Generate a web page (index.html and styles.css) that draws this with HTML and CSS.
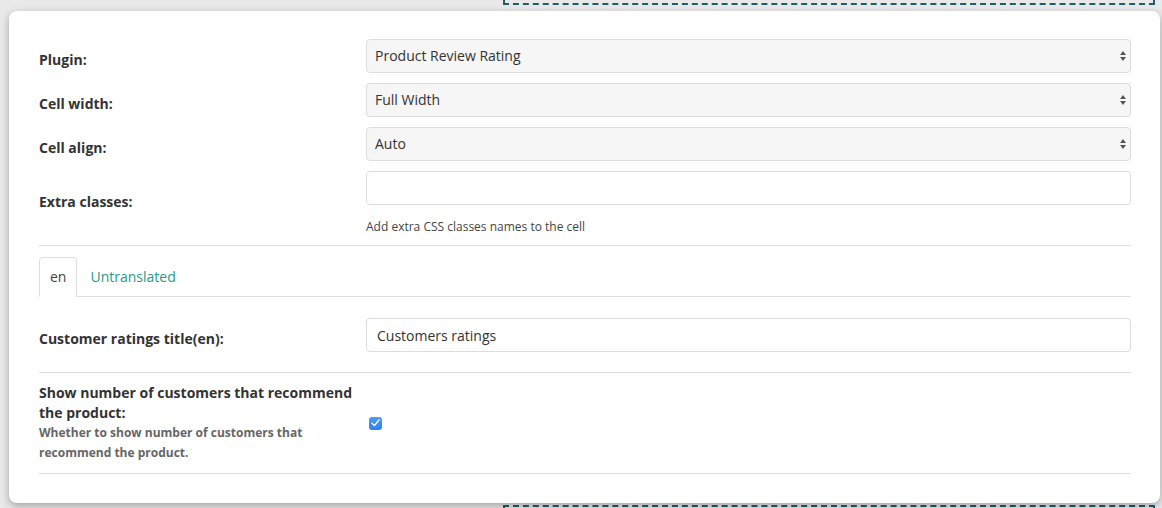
FILE: index.html
```html
<!DOCTYPE html>
<html lang="en">
<head>
<meta charset="utf-8">
<title>Cell settings</title>
<link rel="stylesheet" href="styles.css">
</head>
<body>
<div class="dropzone dropzone-top"></div>
<div class="card">
  <div class="form-row">
    <label class="label">Plugin:</label>
    <div class="select-wrap">
      <select class="control select"><option>Product Review Rating</option></select>
    </div>
  </div>
  <div class="form-row">
    <label class="label">Cell width:</label>
    <div class="select-wrap">
      <select class="control select"><option>Full Width</option></select>
    </div>
  </div>
  <div class="form-row">
    <label class="label">Cell align:</label>
    <div class="select-wrap">
      <select class="control select"><option>Auto</option></select>
    </div>
  </div>
  <div class="form-row form-row-help">
    <label class="label label-plain">Extra classes:</label>
    <div class="field">
      <input class="control input" type="text" value="">
      <p class="help">Add extra CSS classes names to the cell</p>
    </div>
  </div>
  <hr class="divider divider-top">
  <ul class="tabs">
    <li class="tab tab-active">en</li>
    <li class="tab tab-link">Untranslated</li>
  </ul>
  <div class="form-row form-row-last">
    <label class="label">Customer ratings title(en):</label>
    <input class="control input input-text" type="text" value="Customers ratings">
  </div>
  <hr class="divider divider-mid">
  <div class="form-row form-row-check">
    <div class="label-block">
      <div class="label-strong">Show number of customers that recommend the product:</div>
      <div class="label-help">Whether to show number of customers that recommend the product.</div>
    </div>
    <div class="check-cell">
      <span class="checkbox" role="checkbox" aria-checked="true">
        <svg width="9" height="8" viewBox="0 0 9 8"><path d="M1 4.2 L3.4 6.6 L8 1" fill="none" stroke="#fff" stroke-width="1.4" stroke-linecap="round" stroke-linejoin="round"/></svg>
      </span>
    </div>
  </div>
  <hr class="divider divider-bottom">
</div>
<div class="dropzone dropzone-bottom"></div>
</body>
</html>
```

FILE: styles.css
```css
* { box-sizing: border-box; }

html, body {
  margin: 0;
  padding: 0;
}

body {
  width: 1162px;
  height: 508px;
  overflow: hidden;
  background: #e9e9e9;
  font-family: "Open Sans", "Liberation Sans", sans-serif;
  font-size: 14px;
  color: #333;
}

.dropzone {
  margin-left: 503px;
  width: 652px;
  border: 2px dashed #1e5d6d;
}

.dropzone-top {
  height: 5px;
  border-top: none;
}

.dropzone-bottom {
  height: 20px;
  margin-top: 2px;
  border-bottom: none;
}

.card {
  position: relative;
  z-index: 1;
  margin: 6px 0 0 9px;
  width: 1151px;
  height: 492px;
  background: #fff;
  border-radius: 8px;
  box-shadow: 0 3px 9px rgba(0, 0, 0, 0.3);
  padding: 28px 29px 0 30px;
}

.form-row {
  display: grid;
  grid-template-columns: 327px 1fr;
  align-items: center;
  margin-bottom: 10px;
}

.form-row-last {
  margin-bottom: 0;
}

.label {
  font-weight: 700;
  line-height: 20px;
  padding-top: 8px;
  color: #333;
}

.label-plain {
  padding-top: 0;
  margin-top: -4px;
}

.select-wrap {
  position: relative;
}

.select-wrap::before,
.select-wrap::after {
  content: "";
  position: absolute;
  right: 5px;
  width: 0;
  height: 0;
  border-left: 3.5px solid transparent;
  border-right: 3.5px solid transparent;
  pointer-events: none;
}

.select-wrap::before {
  top: 12px;
  border-bottom: 4px solid #555;
}

.select-wrap::after {
  top: 18px;
  border-top: 4px solid #555;
}

.control {
  display: block;
  width: 100%;
  height: 34px;
  margin: 0;
  border: 1px solid #dcdcdc;
  border-radius: 4px;
  font-family: "Open Sans", "Liberation Sans", sans-serif;
  font-size: 14px;
  color: #333;
  outline: none;
}

.select {
  appearance: none;
  -webkit-appearance: none;
  background: #f6f6f6;
  padding: 0 24px 1px 8px;
}

.input {
  background: #fff;
  padding: 0 10px;
}

.input-text {
  padding-top: 1px;
}

.help {
  margin: 12px 0 0;
  font-size: 12px;
  line-height: 20px;
  color: #444;
}

.divider {
  border: 0;
  border-top: 1px solid #dedede;
  height: 0;
  margin: 0;
}

.divider-top {
  margin-top: -2px;
  margin-bottom: 11px;
}

.tabs {
  list-style: none;
  display: flex;
  margin: 0 0 21px;
  padding: 0;
  border-bottom: 1px solid #dedede;
}

.tab {
  height: 40px;
  line-height: 38px;
  margin-right: 2px;
  margin-bottom: -1px;
  border: 1px solid transparent;
  border-radius: 4px 4px 0 0;
}

.tab-active {
  padding: 0 10px;
  border-color: #dedede;
  border-bottom-color: #fff;
  background: #fff;
  color: #444;
}

.tab-link {
  padding: 0 10px;
  color: #1f9b8a;
}

.divider-mid {
  margin-top: 20px;
  margin-bottom: 10px;
}

.form-row-check {
  margin-bottom: 10px;
}

.label-strong {
  font-weight: 700;
  line-height: 20px;
  color: #333;
}

.label-help {
  font-size: 12px;
  font-weight: 700;
  line-height: 20px;
  color: #666;
  padding-right: 40px;
}

.check-cell {
  display: flex;
  align-items: center;
  padding-left: 3px;
}

.checkbox {
  width: 13px;
  height: 13px;
  border-radius: 3px;
  background: linear-gradient(#4d9cf5, #2d80ec);
  display: flex;
  align-items: center;
  justify-content: center;
}
```
